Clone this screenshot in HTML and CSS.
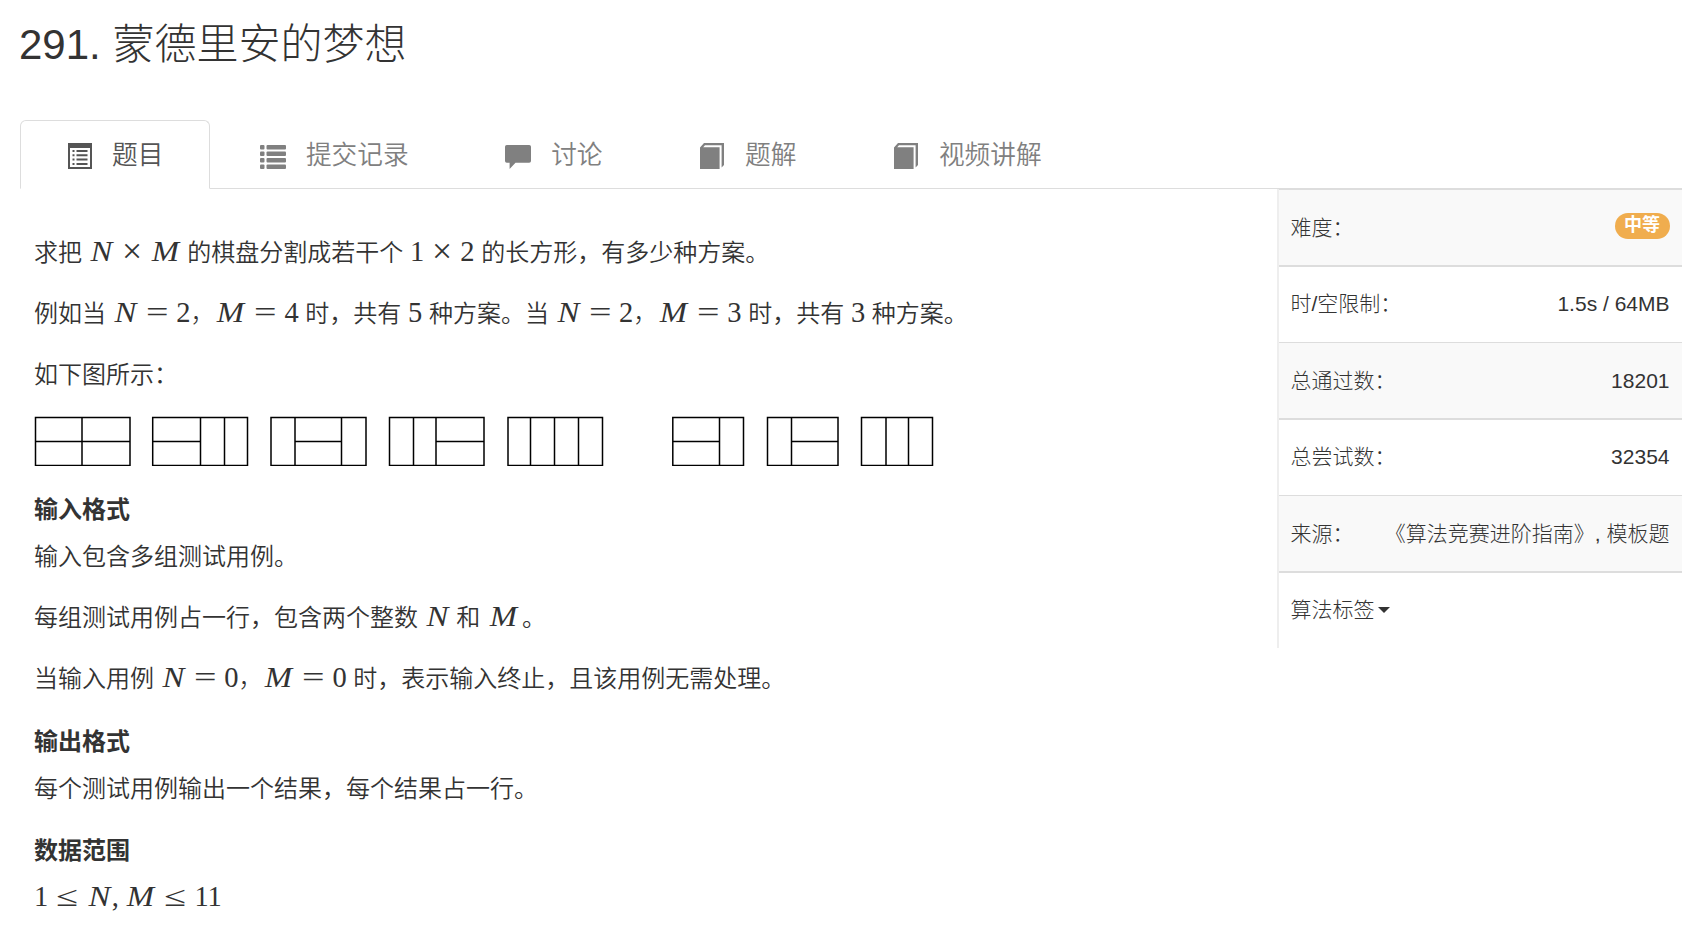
FILE: index.html
```
<!DOCTYPE html>
<html lang="zh-CN">
<head>
  <meta charset="utf-8">
  <title>291. 蒙德里安的梦想</title>
  <link rel="stylesheet" href="styles.css">
</head>
<body>
  <div class="page">
    <h1 class="problem-title">291. 蒙德里安的梦想</h1>

    <nav class="tabs">
      <a class="tab active">
        <svg class="icon" width="26" height="28" viewBox="0 0 26 28">
          <path fill-rule="evenodd" d="M1 1H25V27H1ZM3 6V25H23V6Z"/>
          <path d="M5.5 8h2v2h-2zM9.5 8h11v2h-11zM5.5 12.3h2v2h-2zM9.5 12.3h11v2h-11zM5.5 16.6h2v2h-2zM9.5 16.6h11v2h-11zM5.5 21h2v2h-2zM9.5 21h11v2h-11z"/>
        </svg>
        <span>题目</span>
      </a>
      <a class="tab">
        <svg class="icon" width="26" height="28" viewBox="0 0 26 28">
          <g>
            <rect x="0" y="3" width="4.5" height="4.5" rx="1"/><rect x="6.5" y="3" width="19.5" height="4.5" rx="1"/>
            <rect x="0" y="9.5" width="4.5" height="4.5" rx="1"/><rect x="6.5" y="9.5" width="19.5" height="4.5" rx="1"/>
            <rect x="0" y="16" width="4.5" height="4.5" rx="1"/><rect x="6.5" y="16" width="19.5" height="4.5" rx="1"/>
            <rect x="0" y="22.5" width="4.5" height="4.5" rx="1"/><rect x="6.5" y="22.5" width="19.5" height="4.5" rx="1"/>
          </g>
        </svg>
        <span>提交记录</span>
      </a>
      <a class="tab">
        <svg class="icon" width="26" height="28" viewBox="0 0 26 28">
          <path d="M1.8 3H24.2Q26 3 26 4.8V19Q26 20.8 24.2 20.8H10.5L4.6 27V20.8H1.8Q0 20.8 0 19V4.8Q0 3 1.8 3Z"/>
        </svg>
        <span>讨论</span>
      </a>
      <a class="tab">
        <svg class="icon" width="26" height="28" viewBox="0 0 26 28">
          <path d="M1 5.5L5 1H25V23L22.6 25.5V3.2H6L4.2 5.3H20.6V27H1Z"/>
        </svg>
        <span>题解</span>
      </a>
      <a class="tab">
        <svg class="icon" width="26" height="28" viewBox="0 0 26 28">
          <path d="M1 5.5L5 1H25V23L22.6 25.5V3.2H6L4.2 5.3H20.6V27H1Z"/>
        </svg>
        <span>视频讲解</span>
      </a>
    </nav>

    <div class="content">
      <div class="description">
        <p>求把 <span class="math"><i class="n">N</i><b>×</b><i class="m">M</i></span> 的棋盘分割成若干个 <span class="math">1<b>×</b>2</span> 的长方形，有多少种方案。</p>
        <p>例如当 <span class="math"><i class="n">N</i><b class="rel">=</b>2<span class="sep">，</span><i class="m">M</i><b class="rel">=</b>4</span> 时，共有 <span class="math">5</span> 种方案。当 <span class="math"><i class="n">N</i><b class="rel">=</b>2<span class="sep">，</span><i class="m">M</i><b class="rel">=</b>3</span> 时，共有 <span class="math">3</span> 种方案。</p>
        <p>如下图所示：</p>
        <svg class="tilings" width="900" height="50" viewBox="0 0 900 50">
          <path d="M1.5 1.5H96V49.5H1.5ZM1.5 25.5H96M48 1.5V49.5"/>
          <path d="M118.7 1.5H213.5V49.5H118.7ZM118.7 25.5H166.5M166.5 1.5V49.5M190.5 1.5V49.5"/>
          <path d="M237 1.5H332V49.5H237ZM261 1.5V49.5M307.5 1.5V49.5M261 25.5H307.5"/>
          <path d="M355.5 1.5H450V49.5H355.5ZM379.5 1.5V49.5M402 1.5V49.5M402 25.5H450"/>
          <path d="M474 1.5H568.5V49.5H474ZM496.5 1.5V49.5M520.5 1.5V49.5M544.5 1.5V49.5"/>
          <path d="M638.8 1.5H709.5V49.5H638.8ZM685.5 1.5V49.5M638.8 25.5H685.5"/>
          <path d="M733.5 1.5H804V49.5H733.5ZM757.5 1.5V49.5M757.5 25.5H804"/>
          <path d="M827.5 1.5H898.5V49.5H827.5ZM852 1.5V49.5M874.5 1.5V49.5"/>
        </svg>

        <h4>输入格式</h4>
        <p>输入包含多组测试用例。</p>
        <p>每组测试用例占一行，包含两个整数 <span class="math"><i class="n">N</i></span> 和 <span class="math last"><i class="m">M</i></span>。</p>
        <p>当输入用例 <span class="math"><i class="n">N</i><b class="rel">=</b>0<span class="sep">，</span><i class="m">M</i><b class="rel">=</b>0</span> 时，表示输入终止，且该用例无需处理。</p>

        <h4>输出格式</h4>
        <p>每个测试用例输出一个结果，每个结果占一行。</p>

        <h4>数据范围</h4>
        <p><span class="math">1<b class="rel">≤</b><i class="n">N</i><span class="comma">,</span><i class="m">M</i><b class="rel">≤</b>11</span></p>
      </div>

      <aside class="info">
        <div class="info-row"><span class="label">难度：</span><span class="badge">中等</span></div>
        <div class="info-row"><span class="label">时/空限制：</span><span>1.5s / 64MB</span></div>
        <div class="info-row"><span class="label">总通过数：</span><span>18201</span></div>
        <div class="info-row"><span class="label">总尝试数：</span><span>32354</span></div>
        <div class="info-row"><span class="label">来源：</span><span class="label">《算法竞赛进阶指南》, 模板题</span></div>
        <div class="info-row"><span class="label toggle">算法标签<span class="caret"></span></span></div>
      </aside>
    </div>
  </div>
</body>
</html>
```

FILE: styles.css
```
* {
  box-sizing: border-box;
}

body {
  margin: 0;
  font-family: "Liberation Sans", "Noto Sans CJK SC", sans-serif;
  font-size: 24px;
  font-weight: 350;
  color: #333;
  background: #fff;
  overflow: hidden;
}

.page {
  width: 1682px;
  padding-left: 20px;
}

.problem-title {
  margin: 0 0 0 -1px;
  height: 120px;
  padding-top: 15px;
  font-size: 42px;
  font-weight: 300;
  line-height: 60px;
}

.tabs {
  display: flex;
  gap: 4px;
  height: 69px;
  border-bottom: 1px solid #ddd;
}

.tab {
  display: flex;
  align-items: center;
  height: 69px;
  padding: 0 45.5px 0 46px;
  border: 1px solid transparent;
  border-radius: 6px 6px 0 0;
  font-size: 25.7px;
  color: #808080;
}

.tab span {
  margin-bottom: 5px;
}

.tab.active {
  color: #555;
  background: #fff;
  border-color: #ddd;
  border-bottom-color: #fff;
}

.icon {
  margin: 2px 19px 0 0;
  fill: currentColor;
}

.tab:not(.active) .icon {
  margin-left: -1px;
  margin-right: 20px;
}

.content {
  display: flex;
  justify-content: space-between;
  align-items: flex-start;
}

.description {
  padding: 46px 0 0 14px;
}

.description p {
  margin: 0 0 25px;
  height: 36px;
  line-height: 36px;
  white-space: nowrap;
}

.description h4 {
  margin: 26.3px 0 11px;
  height: 36px;
  font-size: 24px;
  font-weight: 700;
  line-height: 36px;
}

.tilings {
  display: block;
  margin-top: -2px;
  fill: none;
  stroke: #000;
  stroke-width: 1.5;
}

/* formulas */
.math {
  font-family: "Liberation Serif", "Noto Sans CJK SC", serif;
  font-size: 28.5px;
  line-height: 1;
}

.math.last {
  margin: 0 3px 0 1px;
}

.math i,
.math b {
  display: inline-block;
  font-weight: 400;
  text-align: center;
}

.math i {
  transform: scaleX(1.15);
}

.math b {
  width: 36px;
  transform: scale(1.25);
}

.math .rel {
  width: 38.5px;
  transform: scaleX(1.4);
}

.math .n {
  width: 25px;
}

.math .m {
  width: 31px;
}

.math .comma {
  margin-right: 6px;
}

.math .sep {
  font-size: 24.5px;
  font-weight: 300;
}

/* problem info */
.info {
  width: 405px;
  border-left: 2px solid #eee;
  font-size: 21px;
}

.info-row {
  display: flex;
  align-items: center;
  justify-content: space-between;
  height: 76px;
  padding: 0 12.5px 0 11.5px;
  border-top: 1px solid #ddd;
}

.info-row:nth-child(odd) {
  background: #f9f9f9;
}

.info-row:nth-child(even) {
  height: 77px;
  padding-bottom: 2px;
  border-top-width: 2px;
}

.label {
  margin-bottom: 3px;
  font-weight: 300;
}

.badge {
  height: 26px;
  margin-bottom: 3px;
  padding: 0 9.5px;
  border-radius: 13px;
  font-size: 18px;
  font-weight: 700;
  line-height: 24px;
  color: #fff;
  background: #f0ad4e;
}

.toggle {
  display: flex;
  align-items: center;
}

.caret {
  margin: 3px 0 0 3px;
  border-top: 6px solid #333;
  border-left: 6px solid transparent;
  border-right: 6px solid transparent;
}
```
